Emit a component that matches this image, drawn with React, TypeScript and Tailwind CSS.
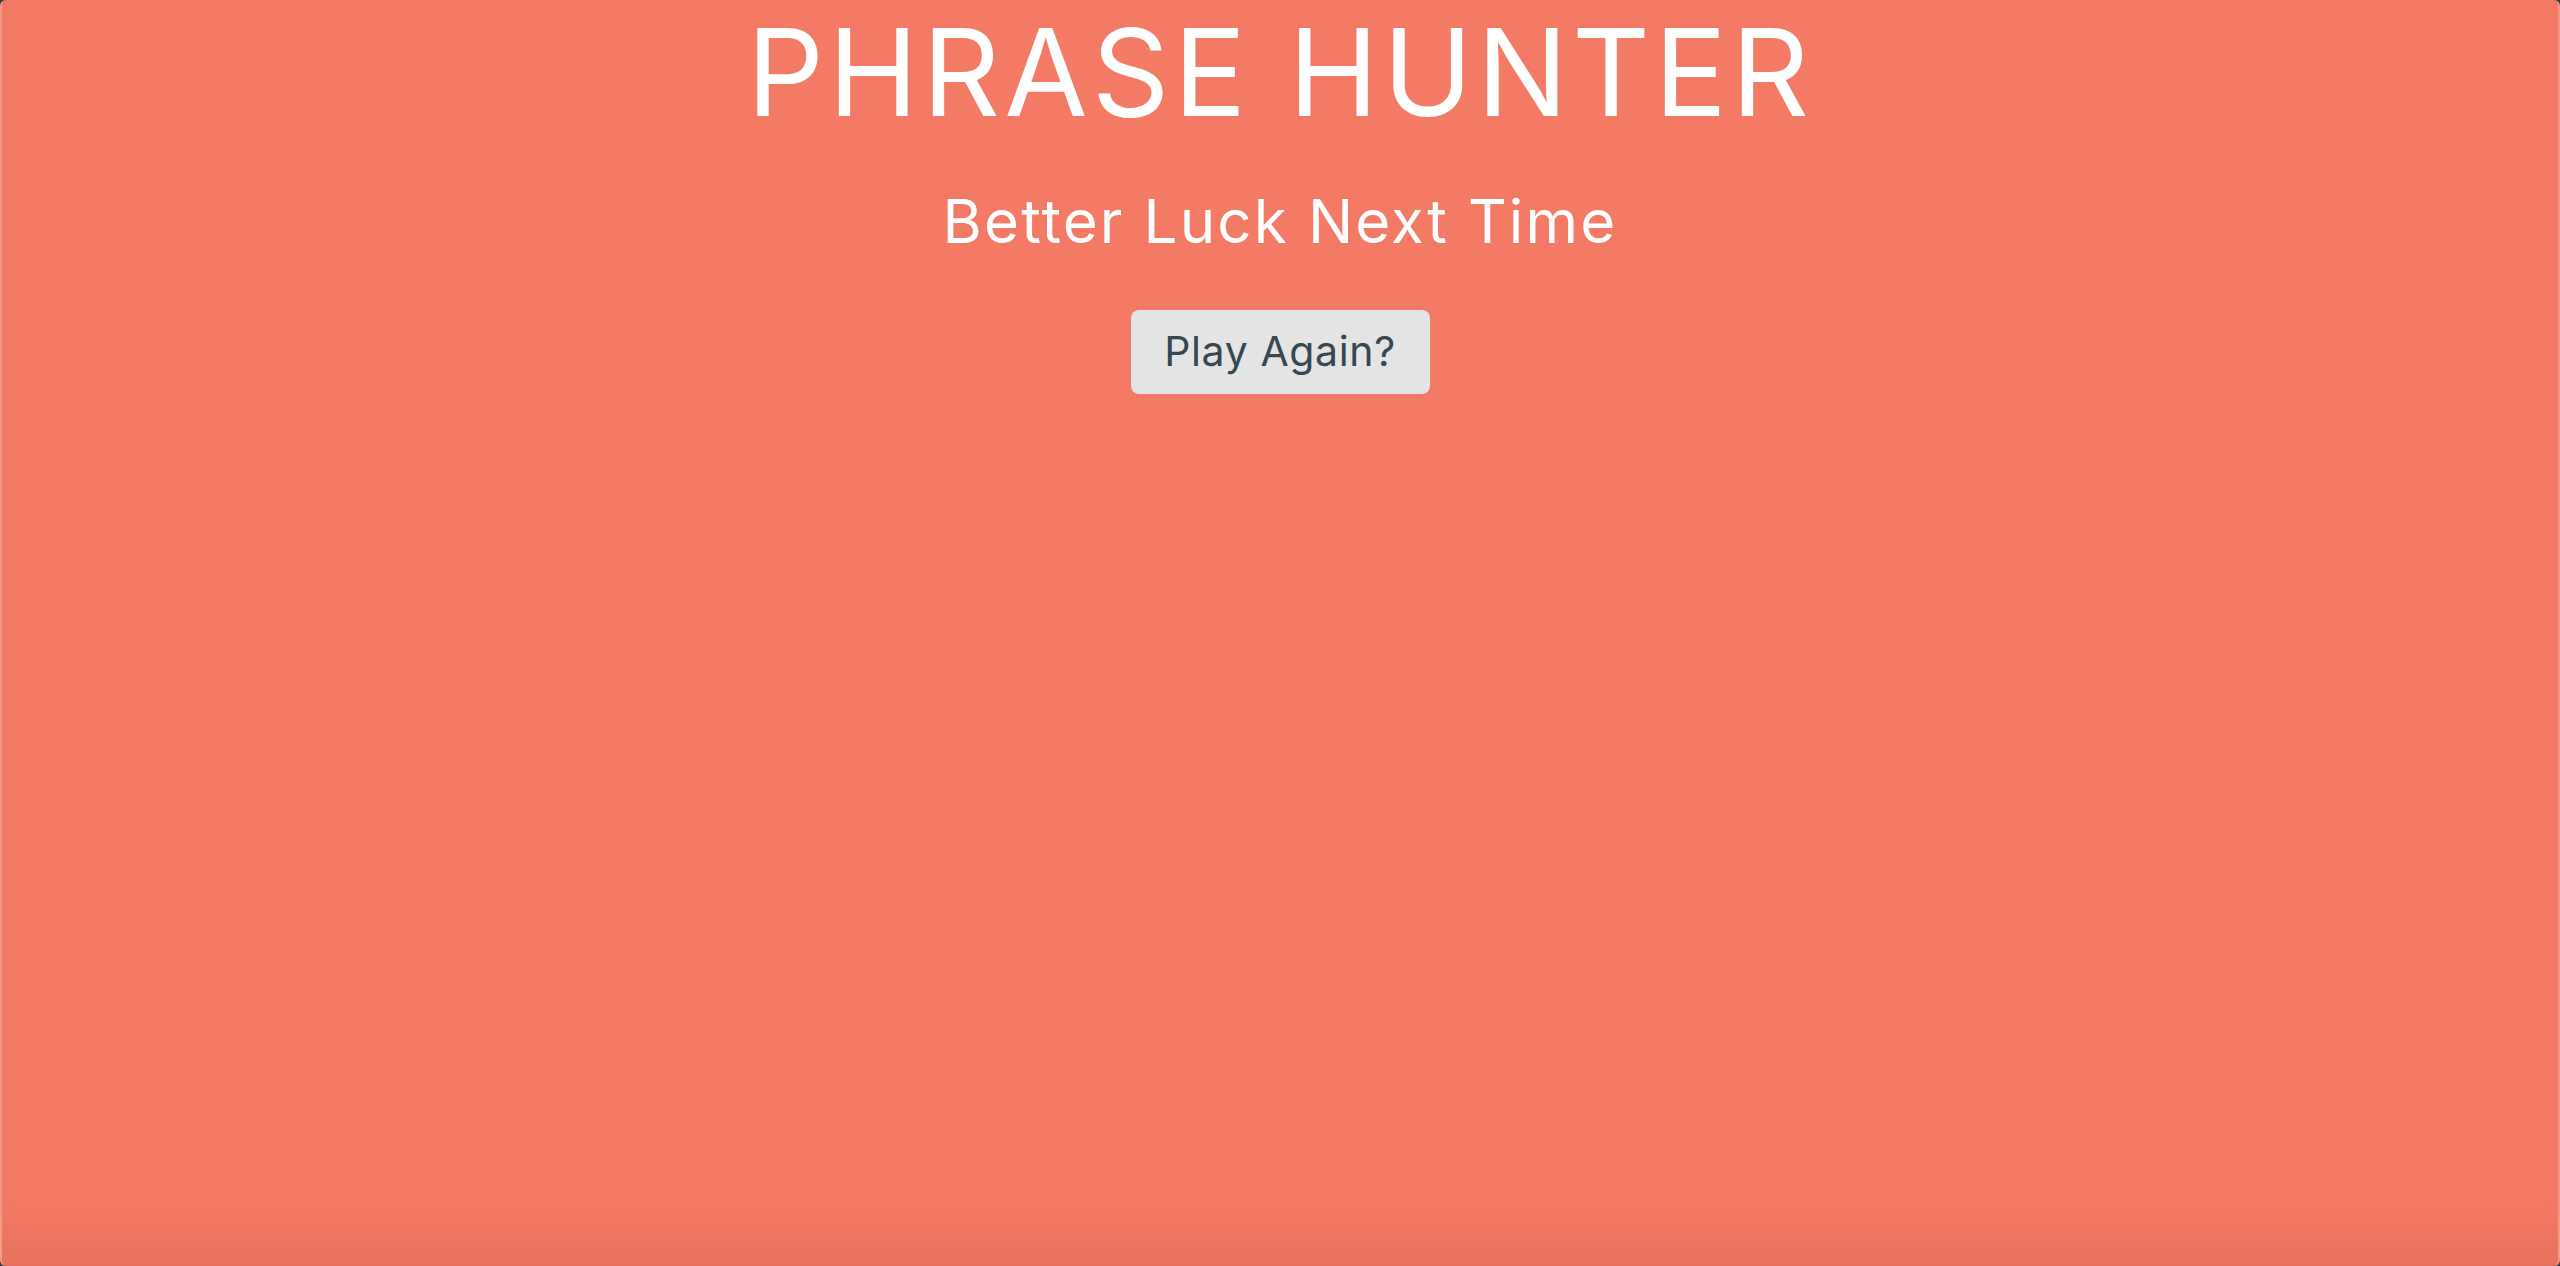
export default function App() {
  return (
    <div className="min-h-screen w-full bg-[#3a3a3a]">
      <main
        className="h-[1266px] w-full rounded-[6px] border-x-2 border-[#f59a89] bg-[#f37a65] shadow-[inset_0_-50px_60px_-40px_rgba(110,40,30,0.16)] flex flex-col items-center text-center"
        style={{ fontFamily: "Inter, 'Open Sans', sans-serif" }}
      >
        {/* Header */}
        <h1 className="pt-[12px] text-[121px] leading-none font-normal text-white tracking-[0.034em]">
          PHRASE HUNTER
        </h1>

        <h2 className="mt-[58px] text-[60px] leading-none font-normal text-white tracking-[0.036em]">
          Better Luck Next Time
        </h2>

        <button className="mt-[59px] w-[299px] h-[84px] rounded-[8px] bg-[#e4e4e4] text-[41px] text-[#37474f] tracking-[0.015em] flex items-center justify-center">
          Play Again?
        </button>
      </main>
    </div>
  );
}
